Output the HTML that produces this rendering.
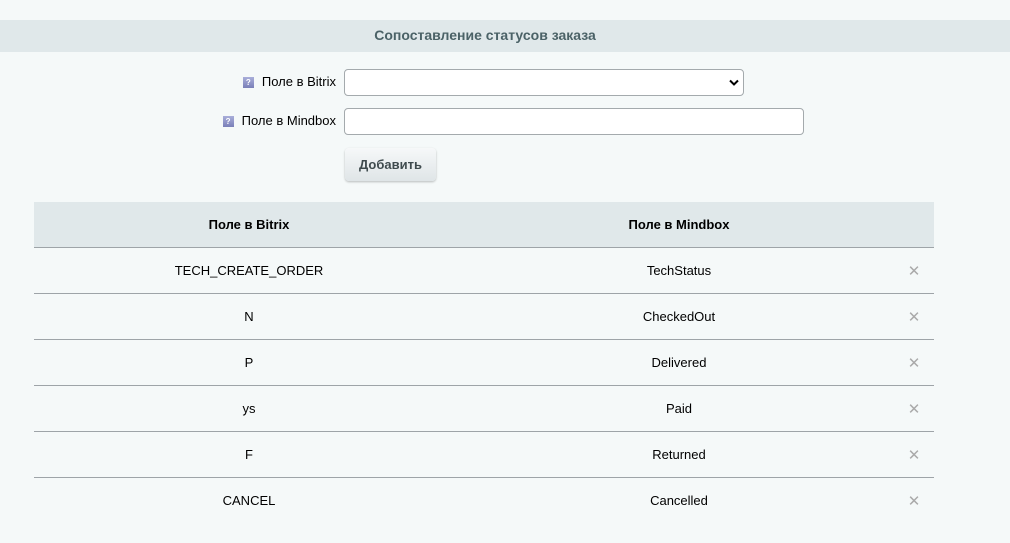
<!DOCTYPE html>
<html><head><meta charset="utf-8"><style>
body{margin:0;width:1010px;height:543px;background:#f5f9f9;font-family:"Liberation Sans",Arial,sans-serif;font-size:13px;color:#000;position:relative;overflow:hidden}
.hdr{position:absolute;left:0;top:20px;width:1010px;height:32px;background:#e0e8ea;text-align:center;line-height:30px;font-weight:bold;color:#4b6267;font-size:14px;text-indent:-40px}
.lbl{position:absolute;text-align:right;line-height:20px}
.q{display:inline-block;width:11px;height:11px;background:linear-gradient(#a9aed9,#7a80b8);color:#fff;font-size:8px;line-height:11px;text-align:center;vertical-align:1px;margin-right:8px;font-weight:bold}
.sel,.inp{position:absolute;background:#fff;border:1px solid #a4aaad;border-radius:4px;box-sizing:border-box}
.btn{position:absolute;left:345px;top:148px;width:91px;height:33px;box-sizing:border-box;border-radius:4px;background:linear-gradient(#f6f8f9,#dfe5e7);box-shadow:0 1px 2px rgba(0,0,0,.25);text-align:center;line-height:33px;font-weight:bold;color:#3f4b4e}
table{position:absolute;left:34px;top:202px;width:900px;border-collapse:collapse}
th{background:#e0e8ea;height:45px;font-weight:bold;border-bottom:1px solid #9ea4a8;padding:0}
td{height:45px;border-bottom:1px solid #9ea4a8;text-align:center;padding:0}
tr:last-child td{border-bottom:none}
td.x{color:#aaa;font-size:15px;width:40px}
</style></head><body>
<div class="hdr">Сопоставление статусов заказа</div>
<div class="lbl" style="left:200px;width:136px;top:72px"><span class="q">?</span>Поле в Bitrix</div>
<div class="sel" style="left:344px;top:69px;width:400px;height:27px"><svg style="position:absolute;right:4px;top:9px" width="10" height="7" viewBox="0 0 10 7"><path d="M1 1.5l4 4 4-4" fill="none" stroke="#000" stroke-width="2"/></svg></div>
<div class="lbl" style="left:200px;width:136px;top:111px"><span class="q">?</span>Поле в Mindbox</div>
<div class="inp" style="left:344px;top:108px;width:460px;height:27px"></div>
<div class="btn">Добавить</div>
<table>
<tr><th style="width:430px">Поле в Bitrix</th><th style="width:430px">Поле в Mindbox</th><th></th></tr>
<tr><td>TECH_CREATE_ORDER</td><td>TechStatus</td><td class="x">✕</td></tr>
<tr><td>N</td><td>CheckedOut</td><td class="x">✕</td></tr>
<tr><td>P</td><td>Delivered</td><td class="x">✕</td></tr>
<tr><td>ys</td><td>Paid</td><td class="x">✕</td></tr>
<tr><td>F</td><td>Returned</td><td class="x">✕</td></tr>
<tr><td>CANCEL</td><td>Cancelled</td><td class="x">✕</td></tr>
</table>
</body></html>
